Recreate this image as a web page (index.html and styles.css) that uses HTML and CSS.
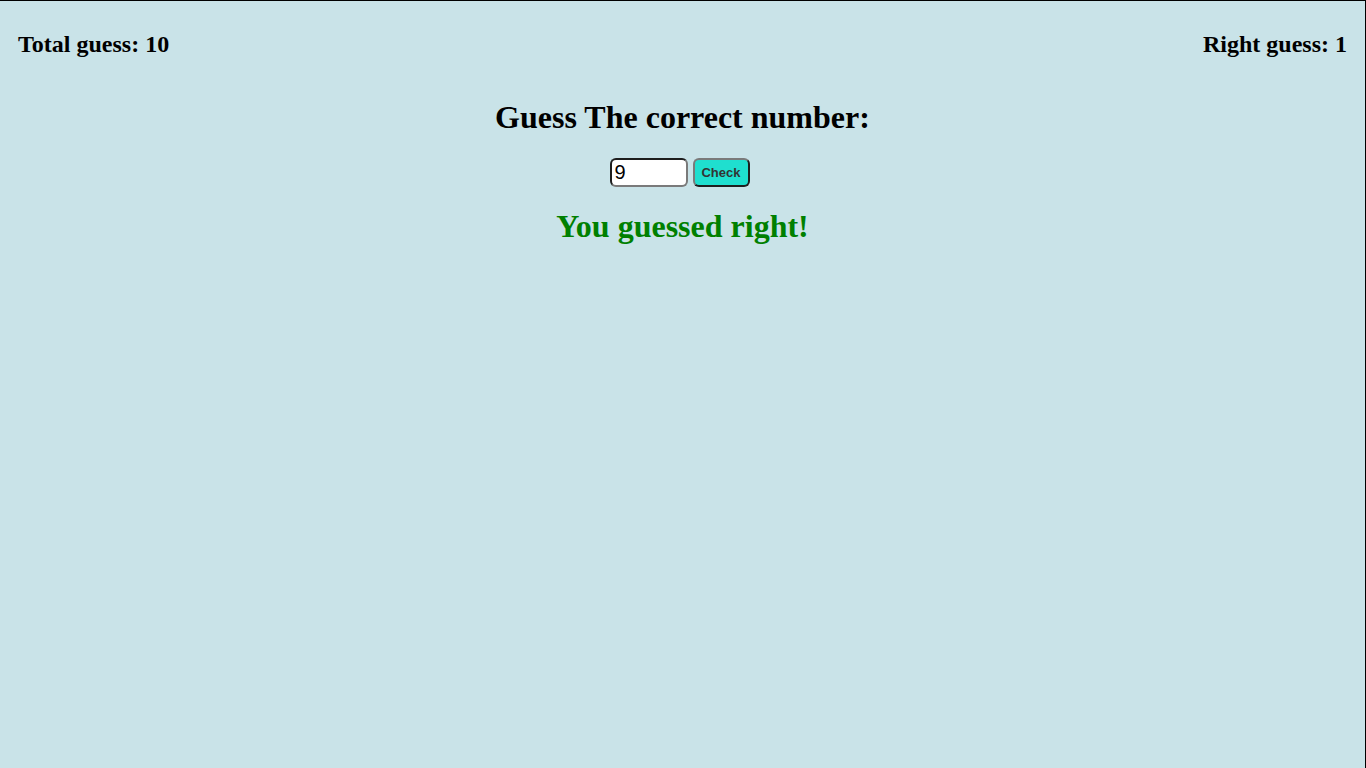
FILE: index.html
```html
<!DOCTYPE html>
<html lang="en">
<head>
<meta charset="utf-8">
<title>Guess the number</title>
<link rel="stylesheet" href="styles.css">
</head>
<body>
<div class="page">
  <header class="scores">
    <h2 class="score">Total guess: 10</h2>
    <h2 class="score">Right guess: 1</h2>
  </header>
  <main class="game">
    <h1 class="title">Guess The correct number:</h1>
    <div class="controls">
      <input class="guess-input" type="text" value="9">
      <button class="check-btn" type="button">Check</button>
    </div>
    <h1 class="result">You guessed right!</h1>
  </main>
</div>
</body>
</html>
```
FILE: styles.css
```css
html, body {
  margin: 0;
  padding: 0;
  height: 100%;
}
body {
  background: #c9e3e8;
  font-family: "Liberation Serif", "Times New Roman", serif;
  color: #000;
}
.page {
  min-height: 100%;
  box-sizing: border-box;
  border-top: 1px solid #000;
  border-right: 1px solid #000;
}
.scores {
  display: flex;
  justify-content: space-between;
  padding: 0 18px 0 18px;
  margin-top: 30px;
}
.score {
  font-size: 24px;
  font-weight: bold;
  margin: 0;
}
.game {
  display: flex;
  flex-direction: column;
  align-items: center;
}
.title {
  font-size: 32px;
  font-weight: bold;
  margin: 41px 0 0;
}
.controls {
  display: flex;
  gap: 5px;
  margin: 22px 6px 0 0;
}
.guess-input {
  box-sizing: border-box;
  width: 78px;
  height: 29px;
  border: 2px solid;
  border-top-color: #1e1e1e;
  border-left-color: #1e1e1e;
  border-bottom-color: #7a7a7a;
  border-right-color: #7a7a7a;
  border-radius: 6px;
  background: #fff;
  padding: 0 3px;
  font-family: "Liberation Sans", Arial, sans-serif;
  font-size: 20px;
  color: #000;
  outline: none;
}
.check-btn {
  box-sizing: border-box;
  width: 57px;
  height: 29px;
  border: 2px solid;
  border-top-color: #7a7a7a;
  border-left-color: #7a7a7a;
  border-bottom-color: #1e1e1e;
  border-right-color: #1e1e1e;
  border-radius: 6px;
  background: #1fdfcf;
  color: #333;
  font-family: "Liberation Sans", Arial, sans-serif;
  font-size: 13px;
  font-weight: bold;
  padding: 0;
}
.result {
  font-size: 32px;
  font-weight: bold;
  color: #008000;
  margin: 21px 0 0;
}
```
